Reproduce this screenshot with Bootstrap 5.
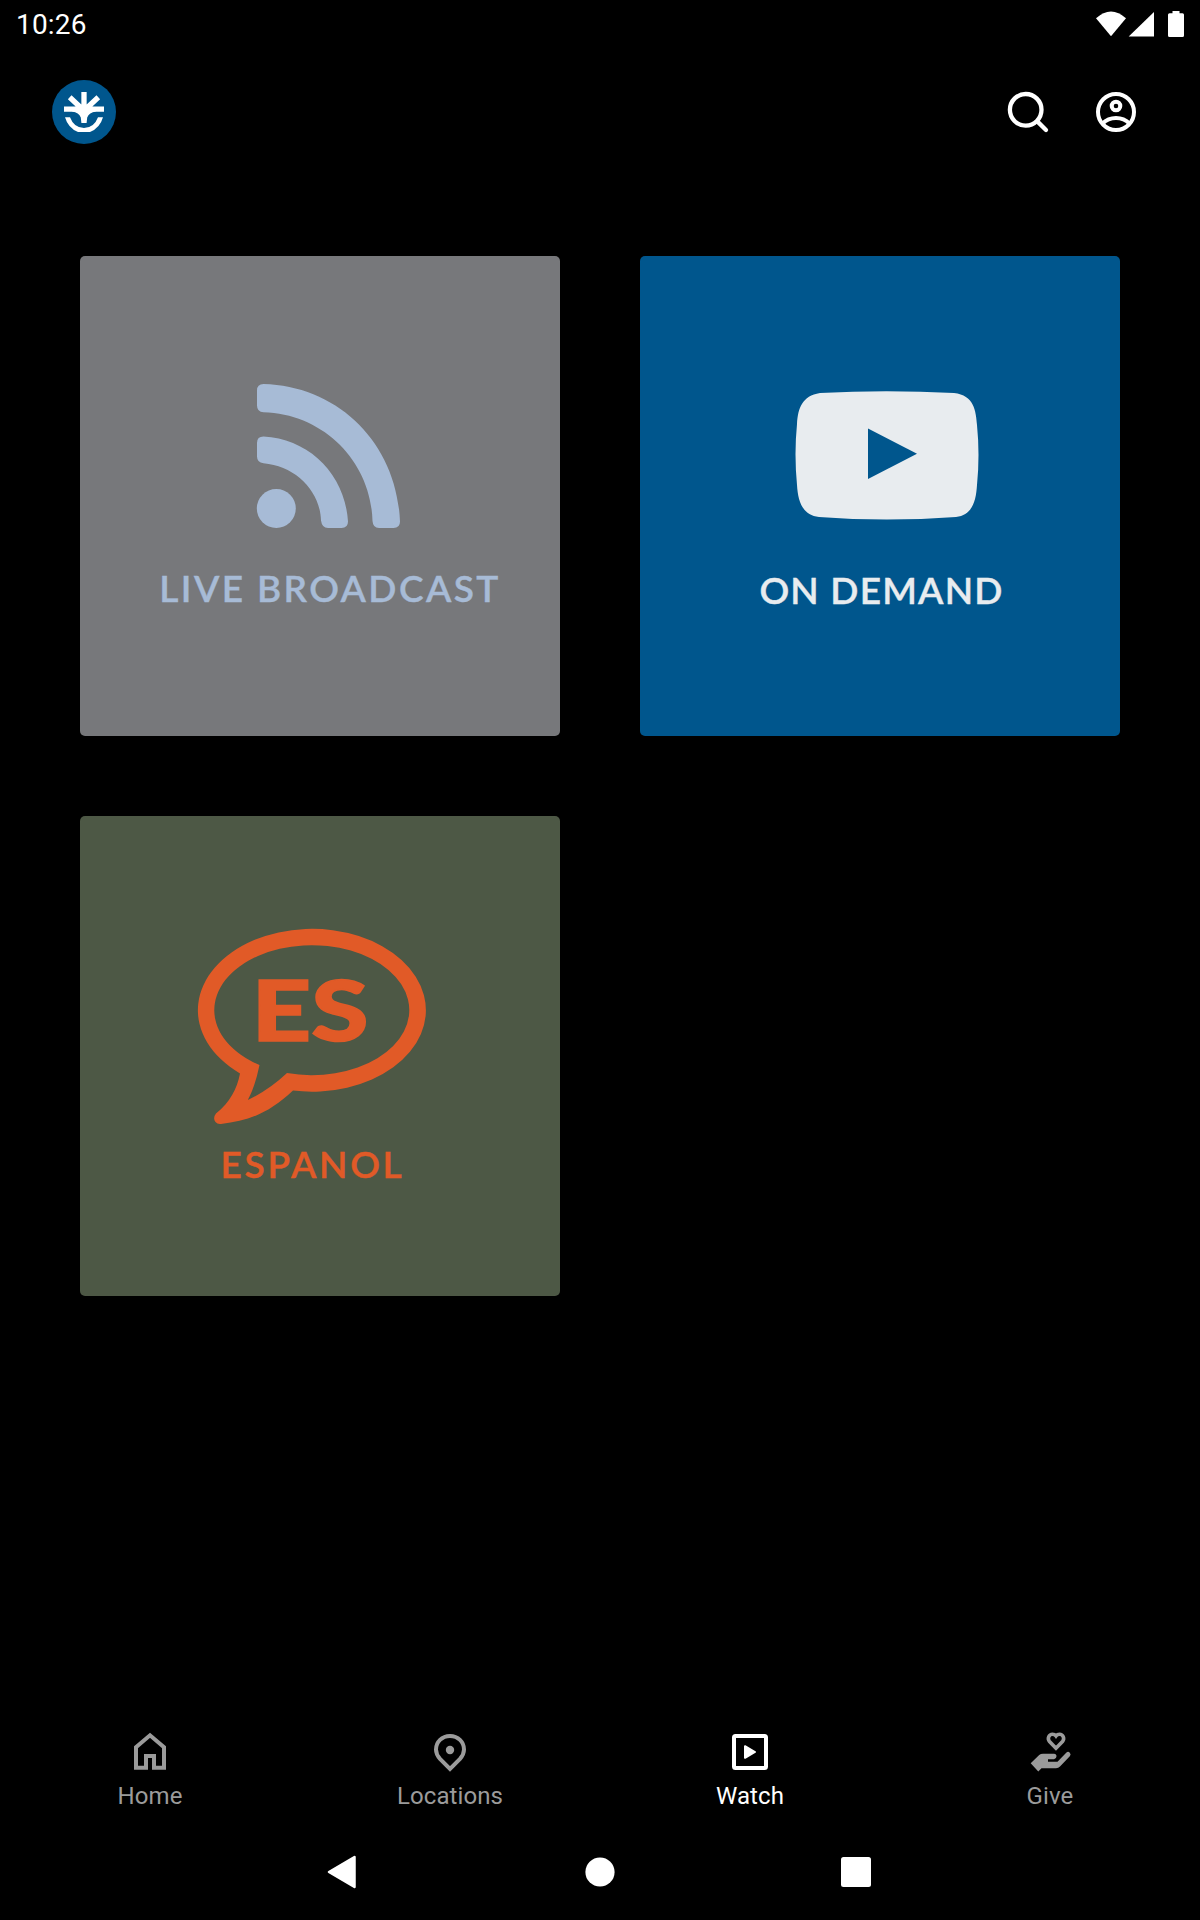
<!DOCTYPE html>
<html lang="en">
<head>
<meta charset="utf-8">
<meta name="viewport" content="width=device-width, initial-scale=1">
<title>Watch</title>
<link href="https://cdn.jsdelivr.net/npm/bootstrap@5.3.0/dist/css/bootstrap.min.css" rel="stylesheet">
<style>
body{background:#000;color:#fff;font-family:Roboto,sans-serif}
svg{display:block;flex:none}
.screen{width:1200px;height:1920px;overflow:hidden}
.status{height:48px;padding:0 16px;font-size:28px;line-height:50px;letter-spacing:.2px}
.appbar{height:128px;padding:0 52px}
.tiles{padding:80px;display:grid;grid-template-columns:480px 480px;gap:80px}
.tile{height:480px;border-radius:5px;overflow:hidden;text-decoration:none}
.tile-live{background:#77787b;color:#a7bbd6}
.tile-demand{background:#00568d;color:#e8ecef}
.tile-es{background:#4d5845;color:#e15a27}
.caption{font-family:Lato,sans-serif;font-weight:600;font-size:37px;line-height:40px;white-space:nowrap;-webkit-text-stroke:.4px currentColor}
.caption-live{letter-spacing:2.4px;padding-left:20px}
.caption-demand{letter-spacing:1.2px;padding-left:3px}
.caption-es{letter-spacing:2.7px;padding-right:15px}
.tabs{height:102px}
.tabs a{width:300px;color:#9b9b9b;font-size:24px;line-height:32px;letter-spacing:.1px;text-decoration:none;padding-top:6px}
.tabs a.active{color:#fff}
.sysnav{height:96px}
</style>
<script src="https://cdn.jsdelivr.net/npm/bootstrap@5.3.0/dist/js/bootstrap.bundle.min.js"></script>
</head>
<body>
<div class="screen d-flex flex-column">
  <div class="status d-flex justify-content-between">
    <span>10:26</span>
    <svg width="100" height="48" viewBox="1084 0 100 48" fill="#fff"><path d="M1096 18.300Q1111 4.700 1126 18.300L1111 36.300Z"/><path d="M1154 12v24.500h-25.300Z"/><path d="M1172.500 11h7v2.300h3q1.500 0 1.500 1.500v20.700q0 1.500-1.500 1.500h-13q-1.500 0-1.500-1.500V14.800q0-1.500 1.500-1.500h3Z"/></svg>
  </div>
  <header class="appbar d-flex justify-content-between align-items-center">
    <svg width="64" height="64" viewBox="52 80 64 64"><circle cx="84" cy="112" r="32" fill="#00568d"/><g fill="none" stroke="#fff" stroke-width="5.300"><path d="M84 92v20M64 109.200h40M69.700 97.200l12 11.300M98.300 97.200l-12 11.300"/></g><path d="M84 104l7 3 5 4.500q-7 1-8.800 6l-.6 5.500h-5.200l-.6-5.500q-1.800-5-8.800-6l5-4.500Z" fill="#fff"/><path d="M65 117.300h5Q74 128 84 128T98 117.300h5Q100 128 90 132H78Q68 128 65 117.300Z" fill="#fff"/></svg>
    <div class="d-flex gap-4">
      <svg width="64" height="64" viewBox="996 80 64 64" fill="none" stroke="#fff"><circle cx="1025.700" cy="109.800" r="15.800" stroke-width="4.300"/><path d="M1037.300 121.400l8.700 8.600" stroke-width="4.300" stroke-linecap="round"/></svg>
      <svg width="64" height="64" viewBox="1084 80 64 64" fill="none" stroke="#fff" stroke-width="4"><circle cx="1116" cy="112" r="18"/><circle cx="1116" cy="106" r="4.300"/><path d="M1102.500 123.500Q1108 118 1116 118T1129.500 123.500"/></svg>
    </div>
  </header>
  <main class="tiles">
    <a class="tile tile-live d-flex flex-column align-items-center">
      <svg width="480" height="312" viewBox="80 256 480 312" fill="currentColor"><circle cx="276.300" cy="508.500" r="19.500"/><path d="M263.500 384Q257 384 257 390.500V405.500Q257 412 263.500 412.300C324 414 371 462 372.500 521Q373 528 379 528H393.500Q400 528 400 521.500C397 443 338 386 263.500 384Z"/><path d="M263.500 436.600Q257 436.600 257 443V456.500Q257 462.500 263.500 463.200C295 466 320 490 321 520.500Q322 528 328 528H341.500Q348 528 348 521.500C345 474 309 439 263.500 436.600Z"/></svg>
      <div class="caption caption-live">LIVE BROADCAST</div>
    </a>
    <a class="tile tile-demand d-flex flex-column align-items-center">
      <svg width="480" height="314" viewBox="640 256 480 314"><path d="M820 393Q886 389.500 954 393C974 395 976 411 977 425Q980 455 977 485C976 500 973 515 956 517Q886 522 819 517C802 515 798 501 797 485Q794 454 797 424C798 408 802 396 820 393Z" fill="#e8ecef"/><path d="M868 428.500L917 453.700 868 479Z" fill="#00568d"/></svg>
      <div class="caption caption-demand">ON DEMAND</div>
    </a>
    <a class="tile tile-es d-flex flex-column align-items-center">
      <svg width="480" height="328" viewBox="80 816 480 328" fill="currentColor"><path fill-rule="evenodd" d="M240 1073.400C237 1089 230 1102 216 1113.500Q212.500 1118 215.500 1122Q217.500 1124.500 221 1124C250 1121 270 1112 293 1090.500A114 81.400 0 1 0 240 1073.400ZM259.500 1065A97.500 65 0 1 1 287 1073Q269 1090 247.800 1100Q255 1087 259.500 1065Z"/><text x="251.500" y="1041" textLength="117" lengthAdjust="spacingAndGlyphs" font-family="Lato" font-weight="900" font-size="84" stroke="currentColor" stroke-width="1.500">ES</text></svg>
      <div class="caption caption-es">ESPANOL</div>
    </a>
  </main>
  <nav class="tabs d-flex mt-auto">
    <a class="d-flex flex-column align-items-center"><svg width="48" height="48" viewBox="126 1728 48 48" fill="none" stroke="currentColor" stroke-width="4"><path d="M136 1767.800V1747.200L150 1735.300 164 1747.200V1767.800H154V1756H146V1767.800Z"/></svg><span class="pt-1">Home</span></a>
    <a class="d-flex flex-column align-items-center"><svg width="48" height="48" viewBox="426 1728 48 48"><path d="M450 1736c-8 0-14 6-14 13.500 0 4 1.500 6.500 4 9.300L450 1769l10-10.200c2.500-2.800 4-5.300 4-9.300 0-7.500-6-13.500-14-13.500Z" fill="none" stroke="currentColor" stroke-width="4"/><circle cx="450" cy="1750" r="4.200" fill="currentColor"/></svg><span class="pt-1">Locations</span></a>
    <a class="active d-flex flex-column align-items-center" aria-current="page"><svg width="48" height="48" viewBox="726 1728 48 48"><rect x="734" y="1736" width="32" height="32" rx="1.500" fill="none" stroke="currentColor" stroke-width="4"/><path d="M745 1746.200L755 1752 745 1757.800Z" fill="currentColor" stroke="currentColor" stroke-width="2" stroke-linejoin="round"/></svg><span class="pt-1">Watch</span></a>
    <a class="d-flex flex-column align-items-center"><svg width="48" height="48" viewBox="1026 1728 48 48"><path d="M1056 1748.200l-6.500-6.700c-2.500-3-.5-7.200 3-7.200 1.600 0 2.700.7 3.500 1.700.8-1 1.900-1.700 3.500-1.700 3.500 0 5.500 4.200 3 7.200Z" fill="none" stroke="currentColor" stroke-width="3.600"/><path d="M1030.700 1763.300l8.500-8.300q1.500-1.300 3.800-1.300h11q2.500 0 2.500 2.500t-2.500 3h-6v2.500h9.500l8.700-9q2-1.700 3.600 0t0 3.600l-9.800 10.300q-1.500 1.700-4 1.700h-14.500l-3.200 3.300Z" fill="currentColor"/></svg><span class="pt-1">Give</span></a>
  </nav>
  <div class="sysnav d-flex justify-content-center">
    <svg width="600" height="96" viewBox="300 1824 600 96" fill="#fff"><path d="M329 1872L354.500 1857V1887Z" stroke="#fff" stroke-width="2.500" stroke-linejoin="round"/><circle cx="600" cy="1872" r="14.600"/><rect x="841" y="1857" width="30" height="30" rx="2.500"/></svg>
  </div>
</div>
</body>
</html>
